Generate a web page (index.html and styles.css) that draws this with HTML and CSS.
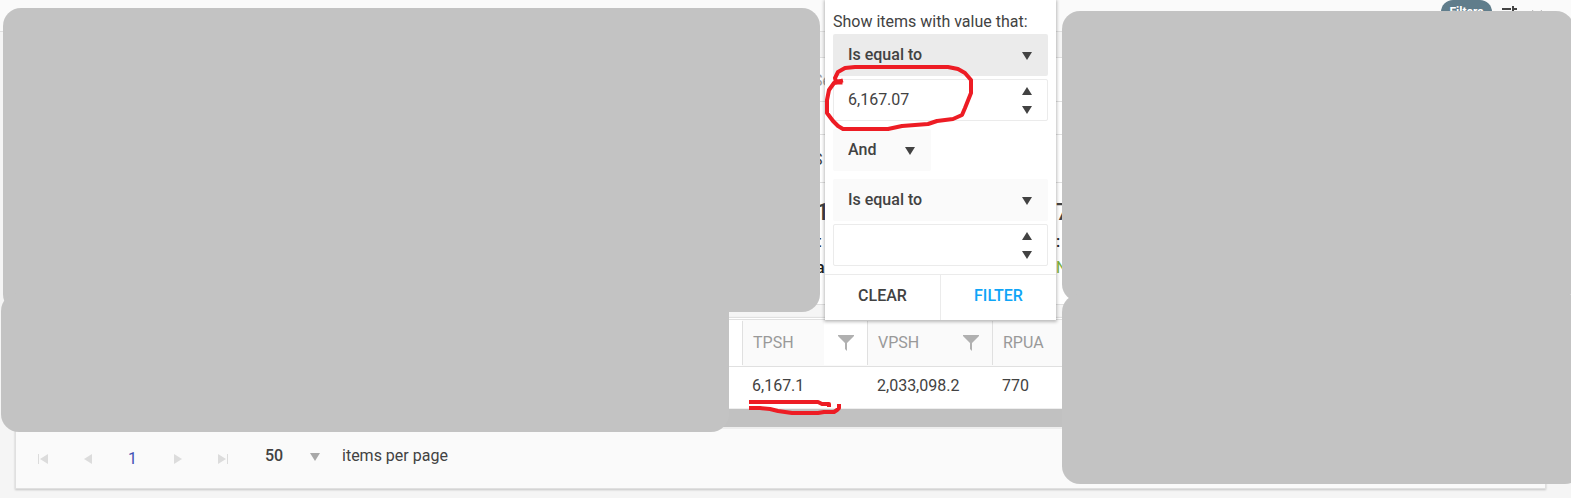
FILE: index.html
```html
<!DOCTYPE html>
<html lang="en">
<head>
  <meta charset="UTF-8">
  <meta name="viewport" content="width=device-width, initial-scale=1.0">
  <title>Grid Filter</title>
  <link rel="stylesheet" href="styles.css">
</head>
<body>
<header class="topbar">
  <span class="badge">Filters</span>
  <svg class="tune" width="18" height="18" viewBox="0 0 18 18"><path d="M1 3h9M12 3h4M12 0v6M1 9h4M9 9h8M7 6v6" stroke="#444" stroke-width="2" fill="none"/></svg>
  <svg class="more" width="18" height="18" viewBox="0 0 18 18"><path d="M4 5l10 10M14 5L4 15" stroke="#777" stroke-width="2"/></svg>
</header>

<main>
  <section class="card summary">
    <div class="row row-search"><span class="muted">Se</span></div>
    <div class="row row-blank"></div>
    <div class="row row-status"><span>S</span></div>
    <div class="row row-totals">
      <div><strong>1</strong><b>t</b><b>a</b></div>
      <div><strong>7</strong><b>:</b><b class="green">N</b></div>
    </div>
  </section>

  <section class="card grid">
    <table>
      <colgroup><col class="col-lead"><col class="col-num"><col class="col-num"><col></colgroup>
      <thead>
        <tr>
          <th></th>
          <th class="active"><div class="head">TPSH<button type="button" aria-label="Filter TPSH"><svg width="16" height="16" viewBox="0 0 16 16"><path d="M0 0h16v1L9 8v8l-2-2V8L0 1z"/></svg></button></div></th>
          <th><div class="head">VPSH<button type="button" aria-label="Filter VPSH"><svg width="16" height="16" viewBox="0 0 16 16"><path d="M0 0h16v1L9 8v8l-2-2V8L0 1z"/></svg></button></div></th>
          <th><div class="head">RPUA</div></th>
        </tr>
      </thead>
      <tbody>
        <tr><td></td><td>6,167.1</td><td>2,033,098.2</td><td>770</td></tr>
      </tbody>
    </table>
    <div class="scrollbar"></div>
    <nav class="pager">
      <button type="button" aria-label="First page"><svg width="10" height="10" viewBox="0 0 10 10"><path d="M0 0h1v10H0zM10 0v10L2 5z"/></svg></button>
      <button type="button" aria-label="Previous page"><svg width="10" height="10" viewBox="0 0 10 10"><path d="M9 0v10L1 5z"/></svg></button>
      <button type="button" class="current">1</button>
      <button type="button" aria-label="Next page"><svg width="10" height="10" viewBox="0 0 10 10"><path d="M1 0v10l8-5z"/></svg></button>
      <button type="button" aria-label="Last page"><svg width="10" height="10" viewBox="0 0 10 10"><path d="M9 0h1v10H9zM0 0v10l8-5z"/></svg></button>
      <div class="page-info">
        <div class="select page-size">
          <select id="pageSize"><option>50</option></select>
          <svg width="10" height="8" viewBox="0 0 10 8"><path d="M0 0h10L5 8z"/></svg>
        </div>
        <label for="pageSize">items per page</label>
      </div>
    </nav>
  </section>
</main>

<!-- Redacted areas -->
<div class="mask mask-a"></div>
<div class="mask mask-b"></div>
<div class="mask mask-c"></div>
<div class="mask mask-d"></div>

<!-- Filter menu -->
<form class="filter-menu">
  <div class="fields">
    <label for="op1">Show items with value that:</label>
    <div class="select focused">
      <select id="op1"><option>Is equal to</option></select>
      <svg width="10" height="8" viewBox="0 0 10 8"><path d="M0 0h10L5 8z"/></svg>
    </div>
    <div class="number">
      <input type="text" value="6,167.07" aria-label="First value">
      <div class="spin">
        <button type="button" aria-label="Increase"><svg width="10" height="8" viewBox="0 0 10 8"><path d="M0 8h10L5 0z"/></svg></button>
        <button type="button" aria-label="Decrease"><svg width="10" height="8" viewBox="0 0 10 8"><path d="M0 0h10L5 8z"/></svg></button>
      </div>
    </div>
    <div class="select logic">
      <select aria-label="Logic"><option>And</option></select>
      <svg width="10" height="8" viewBox="0 0 10 8"><path d="M0 0h10L5 8z"/></svg>
    </div>
    <div class="select">
      <select aria-label="Second operator"><option>Is equal to</option></select>
      <svg width="10" height="8" viewBox="0 0 10 8"><path d="M0 0h10L5 8z"/></svg>
    </div>
    <div class="number">
      <input type="text" aria-label="Second value">
      <div class="spin">
        <button type="button" aria-label="Increase"><svg width="10" height="8" viewBox="0 0 10 8"><path d="M0 8h10L5 0z"/></svg></button>
        <button type="button" aria-label="Decrease"><svg width="10" height="8" viewBox="0 0 10 8"><path d="M0 0h10L5 8z"/></svg></button>
      </div>
    </div>
  </div>
  <div class="actions">
    <button type="reset">CLEAR</button>
    <button type="button" class="primary">FILTER</button>
  </div>
</form>

<!-- Red pen marks -->
<svg class="pen" aria-hidden="true">
  <path d="M840 82H836L835 78L838 72L845 68L855 67H948L958 69L965 73L971 80V93L965 108L962 115L953 119L937 121L928 124L902 126L888 129H843L838 126L833 121L827 113V100L829 90L834 83L841 81"/>
  <path class="thick" d="M837 82H840"/>
  <path d="M751 402H818L822 404H829V405"/>
  <path d="M751 408H760L770 409L778 411L792 413H818L824 412H834L837 410L839 408V406"/>
</svg>
</body>
</html>
```
FILE: styles.css
```css
*{box-sizing:border-box;margin:0;padding:0}
body{position:relative;min-height:100vh;overflow:hidden;background:#f5f5f5;color:#424242;font:16px/24px Roboto,Arial,sans-serif}
button,input,select{font:inherit;color:inherit;border:none;background:none;outline:none}
button{cursor:pointer}
svg{display:block}

.topbar{height:32px;padding:0 25px 0 0;display:flex;justify-content:flex-end;align-items:flex-start;gap:9px;background:#fafafa;border-bottom:1px solid #e0e0e0}
.badge{height:24px;padding:0 8px;border-radius:12px;background:#607d8b;color:#fff;font-size:12px;font-weight:700;line-height:24px;width:51px;text-align:center}
.tune,.more{margin-top:6px}

main{padding:25px 25px 8px 15px}
.card{background:#fff;border:1px solid #e0e0e0}
.summary{margin-bottom:12px}
.row{padding-left:797px;border-bottom:1px solid #e0e0e0}
.row-search{height:44px;line-height:46px}
.row-blank{height:33px}
.row-status{height:48px;line-height:50px}
.row-totals{height:121px;display:flex;padding:12px 0 0 800px;border:none}
.row-totals div{width:240px;display:flex;flex-direction:column}
.row-totals strong{font-size:24px;line-height:34px;font-weight:500}
.row-totals b{line-height:26px;font-weight:500;color:#212121}
.row-totals .green{color:#7cb342;font-weight:400}
.muted{color:#9e9e9e}

.grid{box-shadow:0 1px 2px rgba(0,0,0,.2)}
table{width:100%;border-collapse:separate;border-spacing:0;table-layout:fixed;border-top:1px solid #fff}
.col-lead{width:726px}
.col-num{width:125px}
th{height:48px;background:#fafafa;border-top:1px solid #e0e0e0;border-bottom:1px solid #e0e0e0;color:#999;font-weight:400;text-align:left}
th:first-child{background:#fff}
.head{height:44px;padding-left:10px;display:flex;align-items:center;justify-content:space-between;border-left:1px solid #e0e0e0}
.head button{width:43px;height:44px;display:flex;align-items:center;justify-content:center;fill:#b0b0b0}
.active .head button{background:#fff}
td{height:42px;padding:0 10px 4px;border-bottom:1px solid #eee}
.scrollbar{height:18px;background:#c1c1c1}

.pager{height:61px;padding:0 4px;display:flex;align-items:center;background:#fafafa;border-top:2px solid #eee}
.pager button{width:45px;height:44px;display:flex;align-items:center;justify-content:center;fill:#dcdcdc}
.pager .current{color:#3f51b5}
.page-info{display:flex;align-items:center;padding-bottom:5px}
.page-size{width:70px;margin:0 22px 0 5px}

.select{position:relative;height:42px;background:#fafafa;border-radius:2px}
.select select{width:100%;height:42px;padding:0 15px;appearance:none;font-weight:500}
.select svg{position:absolute;right:16px;top:18px;fill:#424242;pointer-events:none}
.focused{background:#ebebeb}
.pager .select{background:none}
.pager .select svg{right:0;fill:#a8a8a8}

.filter-menu{position:absolute;left:825px;top:0;width:231px;background:#fff;box-shadow:0 1px 3px 1px rgba(0,0,0,.25)}
.fields{padding:10px 8px 8px;display:flex;flex-direction:column}
.fields label{height:24px;white-space:nowrap}
.number{height:42px;margin:3px 0 8px;display:flex;border:1px solid #ebebeb;border-radius:2px}
.number:last-child{margin-bottom:0}
.number input{flex:1;min-width:0;padding-left:14px}
.spin{width:40px;padding:1px 0;display:flex;flex-direction:column}
.spin button{flex:1;display:flex;align-items:center;justify-content:center;fill:#424242}
.logic{width:98px;margin-bottom:8px}
.actions{display:flex;border-top:1px solid #ebebeb}
.actions button{flex:1;height:45px;padding-bottom:4px;font-weight:500}
.actions .primary{border-left:1px solid #ebebeb;color:#0fa5f7}

.mask{position:absolute;background:#c3c3c3;border-radius:18px}
.mask-a{left:3px;top:8px;width:817px;height:304px}
.mask-b{left:1px;top:293px;width:728px;height:139px;border-top-right-radius:0}
.mask-c{left:1062px;top:11px;right:-3px;height:291px}
.mask-d{left:1062px;top:294px;right:-12px;height:190px}
.pen{position:absolute;left:0;top:0;width:100%;height:100%;fill:none;stroke:#ed1c24;stroke-width:4;stroke-linejoin:round;stroke-linecap:square;pointer-events:none}
.pen .thick{stroke-width:5}
```
